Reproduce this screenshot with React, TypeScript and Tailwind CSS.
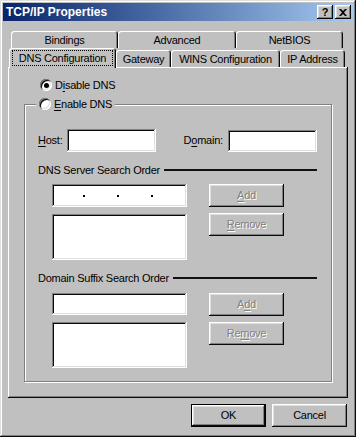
import type { ReactNode } from "react"

const raised =
  "bg-[#c0c0c0] shadow-[inset_-1px_-1px_#0a0a0a,inset_1px_1px_#ffffff,inset_-2px_-2px_#808080,inset_2px_2px_#dfdfdf]"
const sunken =
  "bg-white shadow-[inset_-1px_-1px_#ffffff,inset_1px_1px_#808080,inset_-2px_-2px_#dfdfdf,inset_2px_2px_#0a0a0a]"
const disabledText = "text-[#808080] [text-shadow:1px_1px_0_#ffffff]"

function U({ children }: { children: ReactNode }) {
  return <span className="underline underline-offset-2">{children}</span>
}

function Radio({ checked }: { checked?: boolean }) {
  return (
    <span className="flex h-[12px] w-[12px] shrink-0 items-center justify-center rounded-full bg-white shadow-[inset_1px_1px_#808080,inset_-1px_-1px_#ffffff,inset_2px_2px_#0a0a0a,inset_-2px_-2px_#dfdfdf]">
      {checked ? <span className="h-[5px] w-[5px] rounded-full bg-black" /> : null}
    </span>
  )
}

function Button({
  children,
  disabled,
  isDefault,
  className = "",
}: {
  children: ReactNode
  disabled?: boolean
  isDefault?: boolean
  className?: string
}) {
  if (isDefault) {
    return (
      <div className={`border border-black ${className}`}>
        <div
          className={`flex h-full w-full items-center justify-center ${raised} text-black`}
        >
          {children}
        </div>
      </div>
    )
  }

  return (
    <div
      className={`flex items-center justify-center ${raised} ${
        disabled ? disabledText : "text-black"
      } ${className}`}
    >
      {children}
    </div>
  )
}

function SectionLabel({ children }: { children: ReactNode }) {
  return (
    <div className="flex h-[12px] items-center">
      <span className="leading-none">{children}</span>
      <span className="ml-[4px] h-[2px] flex-1 bg-[#111]" />
    </div>
  )
}

function Tab({
  label,
  width,
  selected,
}: {
  label: ReactNode
  width: number
  selected?: boolean
}) {
  if (selected) {
    return (
      <div
        className="relative z-10 flex h-[20px] items-start self-start rounded-t-[3px] bg-[#c0c0c0] px-[3px] pt-[2px] shadow-[inset_1px_1px_#ffffff,inset_-1px_0_#0a0a0a,inset_-2px_0_#808080]"
        style={{ width }}
      >
        <span className="flex h-[16px] flex-1 items-center justify-center border border-dotted border-black leading-none">
          {label}
        </span>
      </div>
    )
  }

  return (
    <div
      className="flex h-[17px] items-center justify-center self-end rounded-t-[3px] bg-[#c0c0c0] pt-[1px] shadow-[inset_1px_1px_#ffffff,inset_-1px_0_#0a0a0a,inset_-2px_0_#808080]"
      style={{ width }}
    >
      <span className="leading-none">{label}</span>
    </div>
  )
}

export default function App() {
  return (
    <div
      className="flex h-[437px] w-[356px] flex-col bg-[#c0c0c0] text-[11px] tracking-[-0.25px] text-black shadow-[inset_-1px_-1px_#0a0a0a,inset_1px_1px_#dfdfdf,inset_-2px_-2px_#808080,inset_2px_2px_#ffffff]"
      style={{ fontFamily: '"Liberation Sans", Arial, sans-serif' }}
    >
      {/* title bar */}
      <div className="mx-[3px] mt-[3px] flex h-[18px] items-center justify-between bg-gradient-to-r from-[#0a246a] to-[#a6caf0] pl-[3px] pr-[2px]">
        <span className="text-[12px] font-bold tracking-normal text-white">
          TCP/IP Properties
        </span>
        <div className="flex gap-[2px]">
          <div className={`flex h-[14px] w-[16px] items-center justify-center ${raised}`}>
            <span className="text-[11px] font-bold leading-none">?</span>
          </div>
          <div className={`flex h-[14px] w-[16px] items-center justify-center ${raised}`}>
            <svg width="8" height="7" viewBox="0 0 8 7">
              <path d="M0 0h2l2 2 2-2h2L5 3.5 8 7H6L4 5 2 7H0l3-3.5z" fill="#000" />
            </svg>
          </div>
        </div>
      </div>

      {/* tabs */}
      <div className="mt-[10px] flex h-[17px] pl-[11px]">
        <Tab label="Bindings" width={107} />
        <Tab label="Advanced" width={118} />
        <Tab label="NetBIOS" width={107} />
      </div>
      <div className="flex h-[19px] pl-[9px]">
        <Tab label="DNS Configuration" width={107} selected />
        <Tab label="Gateway" width={55} />
        <Tab label="WINS Configuration" width={109} />
        <Tab label="IP Address" width={65} />
      </div>

      {/* panel */}
      <div className="ml-[8px] flex h-[331px] w-[340px] flex-col shadow-[inset_-1px_-1px_#0a0a0a,inset_1px_1px_#ffffff,inset_-2px_-2px_#808080]">
        <div className="mt-[11px] flex h-[14px] items-center gap-[3px] pl-[32px]">
          <Radio checked />
          <span>
            D<U>i</U>sable DNS
          </span>
        </div>

        {/* group box */}
        <div className="relative ml-[16px] mt-[12px] h-[278px] w-[308px] border border-[#808080] pl-[13px] pr-[14px] shadow-[inset_1px_1px_#ffffff,1px_1px_#ffffff]">
          <div className="absolute left-[11px] top-[-7px] flex h-[12px] items-center gap-[3px] bg-[#c0c0c0] px-[3px]">
            <Radio />
            <span>
              <U>E</U>nable DNS
            </span>
          </div>

          <div className="mt-[24px] flex h-[23px] items-center">
            <span className="w-[29px]">
              <U>H</U>ost:
            </span>
            <div className={`h-[23px] w-[90px] ${sunken}`} />
            <span className="ml-[28px] w-[45px]">
              D<U>o</U>main:
            </span>
            <div className={`h-[22px] w-[90px] ${sunken}`} />
          </div>

          <div className="mt-[12px]">
            <SectionLabel>DNS Server Search Order</SectionLabel>
          </div>

          <div className="mt-[8px] flex pl-[14px]">
            <div className="flex w-[135px] flex-col gap-[7px]">
              <div className={`flex h-[23px] items-center pl-[31px] ${sunken}`}>
                <span className="h-[2px] w-[2px] bg-black" />
                <span className="ml-[32px] h-[2px] w-[2px] bg-black" />
                <span className="ml-[32px] h-[2px] w-[2px] bg-black" />
              </div>
              <div className={`h-[46px] ${sunken}`} />
            </div>
            <div className="ml-[22px] flex w-[75px] flex-col gap-[6px]">
              <Button disabled className="h-[23px]">
                <span>
                  <U>A</U>dd
                </span>
              </Button>
              <Button disabled className="h-[23px]">
                <span>
                  <U>R</U>emove
                </span>
              </Button>
            </div>
          </div>

          <div className="mt-[12px]">
            <SectionLabel>Domain Suffix Search Order</SectionLabel>
          </div>

          <div className="mt-[9px] flex pl-[14px]">
            <div className="flex w-[135px] flex-col gap-[7px]">
              <div className={`h-[22px] ${sunken}`} />
              <div className={`h-[46px] ${sunken}`} />
            </div>
            <div className="ml-[22px] flex w-[75px] flex-col gap-[6px]">
              <Button disabled className="h-[23px]">
                <span>
                  A<U>d</U>d
                </span>
              </Button>
              <Button disabled className="h-[23px]">
                <span>
                  Re<U>m</U>ove
                </span>
              </Button>
            </div>
          </div>
        </div>
      </div>

      {/* dialog buttons */}
      <div className="mt-[6px] flex justify-end gap-[6px] pr-[9px]">
        <Button isDefault className="h-[23px] w-[75px]">
          OK
        </Button>
        <Button className="h-[23px] w-[75px]">Cancel</Button>
      </div>
    </div>
  )
}
